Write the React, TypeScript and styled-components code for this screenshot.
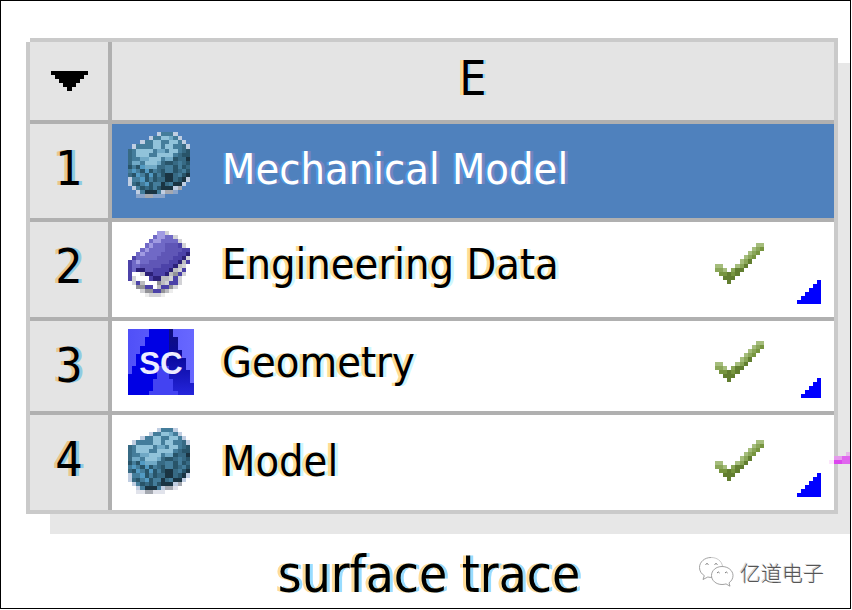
import React from "react";
import styled, { createGlobalStyle } from "styled-components";

const GlobalStyle = createGlobalStyle`
  * { box-sizing: border-box; }
  body { margin: 0; background: #fff; }
`;

const UI_FONT = `"DejaVu Sans Condensed", "DejaVu Sans", sans-serif`;

const Page = styled.main`
  position: relative;
  min-height: calc(100vh - 1px);
  margin-right: 1px;
  padding: 37px 12px 0 25px;
  border: 1px solid #000;
  overflow: hidden;
  background: #fff;
  font-family: ${UI_FONT};
  font-stretch: condensed;
  color: #000;
`;

const System = styled.figure`
  margin: 0;
`;

const Frame = styled.div`
  position: relative;
  z-index: 0;
  border: 4px solid #cacaca;
  background: #fff;

  &::before {
    content: "";
    position: absolute;
    z-index: -2;
    top: 21px;
    left: 20px;
    right: -24px;
    bottom: -24px;
    background: #e7e7e7;
  }

  &::after {
    content: "";
    position: absolute;
    top: -4px;
    left: -4px;
    width: 4px;
    height: 4px;
    background: #fff;
  }
`;

const Grid = styled.table`
  position: relative;
  width: 100%;
  table-layout: fixed;
  border-collapse: separate;
  border-spacing: 0;
  outline: 4px solid #cacaca;
  background: #fff;
`;

const NumberCol = styled.col`
  width: 82px;
`;

const HeadCell = styled.th`
  height: 82px;
  padding: 0;
  border-bottom: 4px solid #b0b0b0;
  background: #e4e4e4;
  font-size: 48px;
  font-weight: 400;
  line-height: 72px;
  vertical-align: top;
  text-align: center;
  text-shadow: -3px 0 #ffd88c, 2px 0 #9adcf8;

  &:first-child {
    border-right: 4px solid #b0b0b0;
    vertical-align: middle;
  }
`;

const MenuButton = styled.button`
  display: block;
  width: 100%;
  height: 78px;
  padding: 0;
  border: 0;
  background: none;

  svg { display: block; margin: 0 auto; }
`;

const Row = styled.tr<{ $height: number }>`
  height: ${(p) => p.$height}px;

  &:last-child > * { border-bottom: 0; }
`;

const NumberCell = styled.th`
  padding: 0;
  border-right: 4px solid #b0b0b0;
  border-bottom: 4px solid #b0b0b0;
  background: #e4e4e4;
  font-size: 48px;
  font-weight: 400;
  line-height: 88px;
  vertical-align: top;
  text-shadow: -3px 0 #ebc68c, 3px 0 #8ecbe2;
`;

const ItemCell = styled.td<{ $title: boolean; $top: number }>`
  position: relative;
  padding: ${(p) => p.$top}px 70px 0 16px;
  border-bottom: 4px solid #b0b0b0;
  background: ${(p) => (p.$title ? "#4f81bd" : "#fff")};
  color: ${(p) => (p.$title ? "#fff" : "#000")};
  vertical-align: top;
`;

const Item = styled.div`
  display: flex;
  align-items: flex-start;
  gap: 28px;
`;

const Label = styled.span<{ $title: boolean }>`
  flex: 1;
  font-size: 43px;
  line-height: ${(p) => (p.$title ? 74 : 66)}px;
  white-space: nowrap;
  text-shadow: ${(p) =>
    p.$title ? "-2px 0 #4b9ae4, 3px 0 #7585c0" : "-3px 0 #ffdc94, 3px 0 #cdf7ff"};
`;

const Status = styled.span`
  flex: none;
  padding-top: 12px;

  svg { display: block; }
`;

const Corner = styled.span`
  position: absolute;
  right: 13px;
  bottom: 13px;

  svg { display: block; }
`;

const Caption = styled.figcaption`
  margin-top: 20px;
  padding: 10px 6px 0 0;
  font-size: 51px;
  line-height: 62px;
  text-align: center;
  text-shadow: -3px 0 #ffdc98, 3px 0 #98dcff;
`;

const Connector = styled.svg`
  position: absolute;
  right: 0;
  top: 451px;
`;

const Watermark = styled.div`
  position: absolute;
  right: 26px;
  bottom: 20px;
  display: flex;
  align-items: center;
  gap: 6px;
  color: #555;
  font-family: "Noto Sans CJK SC", sans-serif;
  font-size: 21px;
  font-weight: 300;
  line-height: 32px;
  text-shadow: -1px -1px #d4d4d4;
`;

const IconBox = styled.span`
  flex: none;
  width: 66px;
  height: 66px;

  svg { display: block; }
`;

type Palette = Record<string, string>;

function Pixels({ rows, palette, width, height, label }: {
  rows: string[];
  palette: Palette;
  width: number;
  height: number;
  label?: string;
}) {
  return (
    <svg
      width={width}
      height={height}
      viewBox={`0 0 ${rows[0].length} ${rows.length}`}
      preserveAspectRatio="none"
      shapeRendering="crispEdges"
      role={label ? "img" : undefined}
      aria-label={label}
      aria-hidden={label ? undefined : true}
    >
      {rows.flatMap((row, y) =>
        [...row].map((key, x) =>
          palette[key] ? (
            <rect key={`${x}-${y}`} x={x} y={y} width={1} height={1} fill={palette[key]} />
          ) : null
        )
      )}
    </svg>
  );
}

const CUBE_ROWS = [
  ".......waaaw...",
  ".....waaccbaw..",
  "...waaccaaccaw.",
  ".waaaaccaccaagw",
  "gaccccabbaccagd",
  "gacccaaccccagdd",
  "gaabbcccabbdgge",
  "gbbacccbgddgagd",
  "dadfbbbggaadadg",
  "afadfdagdaadgad",
  "gdfadfdadeegade",
  "dfdafdagdaadeed",
  "waafdadggeegdew",
  "wgdafdaaegaeew.",
  ".wadgdadeeews..",
  "..waeeeawssT...",
  "..TTssTTT......",
].filter((_, i) => i !== 11);

const CUBE_PALETTE: Palette = {
  w: "#c0cee2",
  a: "#447d9b",
  b: "#70a9c6",
  c: "#91c3da",
  d: "#285469",
  e: "#1a3442",
  f: "#529ac3",
  g: "#376a84",
  s: "#a4a8b0",
  T: "rgba(195,200,215,0.5)",
};

const BOOK_ROWS = [
  ".......LLg.....",
  "......MLLMMg...",
  ".....MLLMMMMg..",
  "....MLMMMNNNPg.",
  "...MLMMMMNNNNPP",
  "..MLMMMMNNNNPPD",
  ".PMMMMMNNNNPPDg",
  "PMLMMNNNNNPPDhP",
  "PMMNNNNNPPPDhg.",
  "PMDDNNPPPPDhgP.",
  "PWWgDDPPPDhGPg.",
  "PgWWWPDDhhgPg..",
  ".gPhWWWGhgPPg..",
  "..GGPPWhPPGg...",
  "...gGGPPGht....",
  "....tgggt......",
];

const BOOK_PALETTE: Palette = {
  L: "#a09ae2",
  M: "#7069c6",
  N: "#5f56b6",
  P: "#4c42a8",
  D: "#2c2078",
  W: "#fff",
  g: "#d2d2d6",
  h: "#bcbcc0",
  G: "#929298",
  t: "#ececec",
};

const CHECK_ROWS = [
  "..........ll",
  ".........lmn",
  "........lmn.",
  ".......lmn..",
  "......lmd...",
  "ll...lmd....",
  "mml.mdd.....",
  ".nndnd......",
  "..ddd.......",
  "...d........",
];

const CHECK_PALETTE: Palette = {
  l: "#a5bd7c",
  m: "#8aa658",
  n: "#77953f",
  d: "#627e30",
};

const ARROW_ROWS = ["kkkkkkkkk", ".kkkkkkk.", "..kkkkk..", "...kkk...", "....k...."];

function stairs(n: number) {
  return Array.from({ length: n }, (_, i) => ".".repeat(n - 1 - i) + "k".repeat(i + 1));
}

function CubeIcon() {
  return <Pixels rows={CUBE_ROWS} palette={CUBE_PALETTE} width={62} height={66} />;
}

function BookIcon() {
  return <Pixels rows={BOOK_ROWS} palette={BOOK_PALETTE} width={62} height={66} />;
}

function GeometryIcon() {
  const steps = Array.from({ length: 16 }, (_, y) => y);
  return (
    <svg width="66" height="66" viewBox="0 0 16 16" aria-hidden="true">
      <defs>
        <linearGradient id="leg" x1="0" y1="0" x2="0" y2="16" gradientUnits="userSpaceOnUse">
          <stop offset="0" stopColor="#10107c" />
          <stop offset="0.4" stopColor="#08089c" />
          <stop offset="1" stopColor="#2525dc" />
        </linearGradient>
        <linearGradient id="sky" x1="0" y1="0" x2="1" y2="0">
          <stop offset="0" stopColor="#5050f8" />
          <stop offset="1" stopColor="#6868ff" />
        </linearGradient>
      </defs>
      <g shapeRendering="crispEdges">
        <rect width="16" height="16" fill="url(#sky)" />
        {steps.map((y) => {
          const left = Math.max(0, Math.round(5 - y * 0.42));
          const mid = Math.round(10 - y * 0.1);
          return <rect key={y} x={left} y={y} width={mid - left} height={1} fill="#0000e4" />;
        })}
        {steps.map((y) => {
          const start = Math.round(10.4 - y * 0.15);
          const end = Math.min(16, Math.round(11 + y * 0.36));
          return <rect key={y} x={start} y={y} width={end - start} height={1} fill="url(#leg)" />;
        })}
        {steps.slice(9).map((y) => {
          const half = 1 + Math.floor((y - 9) / 2.6);
          return <rect key={y} x={8 - half} y={y} width={half * 2 + 1} height={1} fill="#4343f2" />;
        })}
      </g>
      <text x="8" y="11" textAnchor="middle" fontFamily="Liberation Sans" fontWeight="700" fontSize="7.6" fill="#ececff">
        SC
      </text>
    </svg>
  );
}

function ChatLogo() {
  return (
    <svg width="36" height="32" viewBox="0 0 36 32" fill="#fff" stroke="#8a8a8a" strokeWidth="0.8" aria-hidden="true">
      <path d="M13 1.500C6.500 1.500 1.500 6 1.500 11.500c0 3.500 1.800 6.300 4.800 8.100L5 23.500l4.800-2.500c1.500.4 3 .5 4.700.4" />
      <path d="M13 1.500c6 0 10.500 3.300 11.500 8.500" stroke="#bbb" />
      <path d="M24 10.500c-6 0-10.500 4-10.500 9s4.500 9 10.500 9c1.500 0 2.800-.2 4-.6l4 2.300-1-3.400c2.500-1.700 4-4.300 4-7.300 0-5-5-9-11-9z" />
      <path d="M7.500 8.500q1.500-2 3 0M16.500 8.500q1.500-2 3 0M19 17q1.300-2 2.600 0M27 17q1.300-2 2.600 0" fill="none" stroke="#555" />
    </svg>
  );
}

const ITEMS = [
  { name: "Mechanical Model", icon: <CubeIcon />, height: 98, top: 8, title: true, steps: 0 },
  { name: "Engineering Data", icon: <BookIcon />, height: 99, top: 9, title: false, steps: 6 },
  { name: "Geometry", icon: <GeometryIcon />, height: 94, top: 8, title: false, steps: 5 },
  { name: "Model", icon: <CubeIcon />, height: 95, top: 13, title: false, steps: 6 },
];

export default function App() {
  return (
    <>
      <GlobalStyle />
      <Page>
        <System>
          <Frame>
            <Grid>
              <colgroup>
                <NumberCol />
                <col />
              </colgroup>
              <thead>
                <tr>
                  <HeadCell>
                    <MenuButton type="button" aria-label="System menu">
                      <Pixels rows={ARROW_ROWS} palette={{ k: "#000" }} width={37} height={20} />
                    </MenuButton>
                  </HeadCell>
                  <HeadCell scope="col">E</HeadCell>
                </tr>
              </thead>
              <tbody>
                {ITEMS.map((item, i) => (
                  <Row key={item.name} $height={item.height}>
                    <NumberCell scope="row">{i + 1}</NumberCell>
                    <ItemCell $title={item.title} $top={item.top}>
                      <Item>
                        <IconBox>{item.icon}</IconBox>
                        <Label $title={item.title}>{item.name}</Label>
                        {item.steps > 0 && (
                          <Status>
                            <Pixels rows={CHECK_ROWS} palette={CHECK_PALETTE} width={49} height={41} label="Up to date" />
                          </Status>
                        )}
                      </Item>
                      {item.steps > 0 && (
                        <Corner>
                          <Pixels
                            rows={stairs(item.steps)}
                            palette={{ k: "#0000ff" }}
                            width={item.steps * 4}
                            height={item.steps * 4}
                          />
                        </Corner>
                      )}
                    </ItemCell>
                  </Row>
                ))}
              </tbody>
            </Grid>
          </Frame>
          <Caption>surface trace</Caption>
        </System>
        <Connector width="21" height="12" viewBox="0 0 21 12" shapeRendering="crispEdges" aria-hidden="true">
          <rect x="0" y="8" width="5" height="4" fill="#fbe6fb" />
          <rect x="5" y="4" width="12" height="4" fill="#e59bec" />
          <rect x="5" y="8" width="8" height="4" fill="#dc46ee" />
          <rect x="13" y="4" width="8" height="8" fill="#e066ee" />
          <rect x="17" y="0" width="4" height="4" fill="#e6b8ea" />
        </Connector>
        <Watermark>
          <ChatLogo />
          <span>亿道电子</span>
        </Watermark>
      </Page>
    </>
  );
}
